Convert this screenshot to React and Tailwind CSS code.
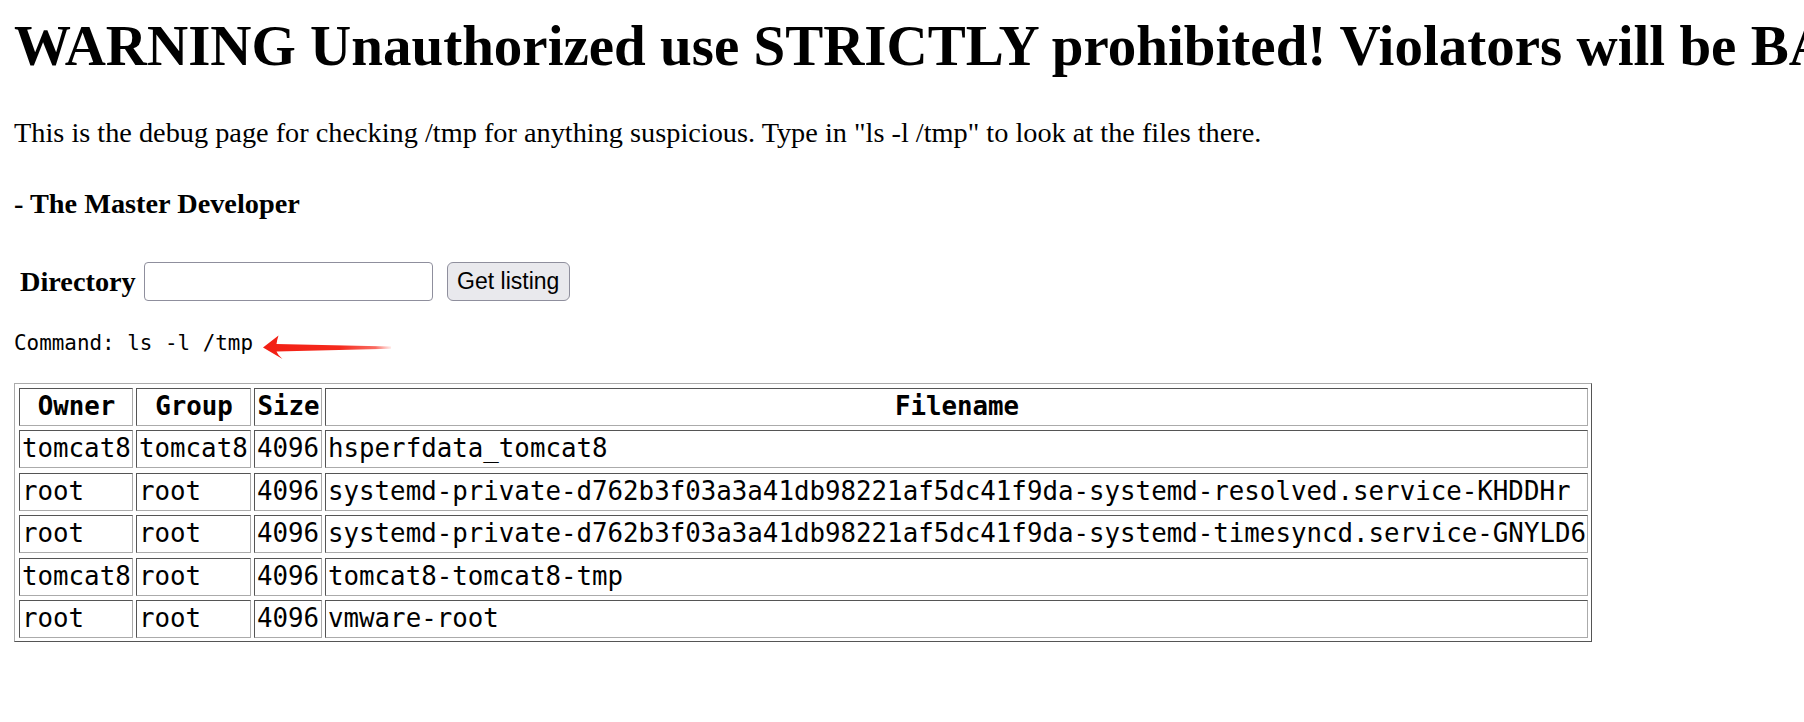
import React from "react";

const rows = [
  ["tomcat8", "tomcat8", "4096", "hsperfdata_tomcat8"],
  ["root", "root", "4096", "systemd-private-d762b3f03a3a41db98221af5dc41f9da-systemd-resolved.service-KHDDHr"],
  ["root", "root", "4096", "systemd-private-d762b3f03a3a41db98221af5dc41f9da-systemd-timesyncd.service-GNYLD6"],
  ["tomcat8", "root", "4096", "tomcat8-tomcat8-tmp"],
  ["root", "root", "4096", "vmware-root"],
];

const cell =
  "h-[38px] box-border border border-t-[#555555] border-l-[#555555] border-r-[#ababab] border-b-[#ababab] pl-[2px] pr-[1px] leading-[35px] whitespace-nowrap overflow-hidden";

export default function App() {
  return (
    <div className="w-full h-[722px] overflow-hidden bg-white text-black">
      <div
        className="pt-[14px] px-[14px] flex flex-col items-start"
        style={{ fontFamily: '"Liberation Serif", "Times New Roman", serif' }}
      >
        <h1 className="m-0 h-[64px] leading-[64px] text-[57px] font-bold whitespace-nowrap">
          WARNING Unauthorized use STRICTLY prohibited! Violators will be BANNED!
        </h1>
        <p className="mt-[39px] leading-[32px] text-[28.3px] whitespace-nowrap">
          This is the debug page for checking /tmp for anything suspicious. Type in "ls -l /tmp" to look at the files there.
        </p>
        <h4 className="mt-[39px] leading-[32px] text-[28.3px] font-bold whitespace-nowrap">
          - The Master Developer
        </h4>
        <div className="mt-[42px] pl-[6px] flex items-center h-[39px]">
          <span className="text-[28.3px] leading-[32px] font-bold">Directory</span>
          <input
            type="text"
            className="ml-[8px] w-[289px] h-[39px] box-border border border-[#8f8f9d] rounded-[4px] bg-white outline-none"
          />
          <button
            className="ml-[14px] w-[123px] h-[39px] box-border border border-[#8f8f9d] rounded-[6px] bg-[#e9e9ed] text-[23px] text-black flex items-center justify-center"
            style={{ fontFamily: '"Liberation Sans", Arial, sans-serif' }}
          >
            Get listing
          </button>
        </div>
        <div
          className="relative mt-[29px] h-[26px] leading-[26px] text-[20.9px] whitespace-nowrap"
          style={{ fontFamily: '"DejaVu Sans Mono", monospace' }}
        >
          Command: ls -l /tmp
          <svg
            className="absolute left-[249px] top-[5px]"
            width="130"
            height="25"
            viewBox="0 0 130 25"
          >
            <defs>
              <linearGradient id="arrowGrad" x1="0" y1="0" x2="1" y2="0">
                <stop offset="0" stopColor="#f21f14" />
                <stop offset="0.6" stopColor="#f52a1d" />
                <stop offset="0.88" stopColor="#f8493c" stopOpacity="0.8" />
                <stop offset="1" stopColor="#ff6a5e" stopOpacity="0.15" />
              </linearGradient>
            </defs>
            <path
              d="M0 12.5 L15.5 0.5 Q14 5 13.5 9 L128 11.6 L128 13.8 L13.5 16.5 Q15 20.5 19.5 24 Z"
              fill="url(#arrowGrad)"
            />
          </svg>
        </div>
        <div
          className="mt-[27px] box-border border border-t-[#ababab] border-l-[#ababab] border-r-[#555555] border-b-[#555555] p-[3px] pt-[4px] pl-[4px] grid grid-cols-[114px_115px_68px_1263px] gap-x-[3px] gap-y-[4.4px] text-[25.8px]"
          style={{ fontFamily: '"DejaVu Sans Mono", monospace' }}
        >
          <div className={cell + " text-center font-bold"}>Owner</div>
          <div className={cell + " text-center font-bold"}>Group</div>
          <div className={cell + " text-center font-bold"}>Size</div>
          <div className={cell + " text-center font-bold"}>Filename</div>
          {rows.map((r, i) => (
            <React.Fragment key={i}>
              <div className={cell}>{r[0]}</div>
              <div className={cell}>{r[1]}</div>
              <div className={cell}>{r[2]}</div>
              <div className={cell}>{r[3]}</div>
            </React.Fragment>
          ))}
        </div>
      </div>
    </div>
  );
}
